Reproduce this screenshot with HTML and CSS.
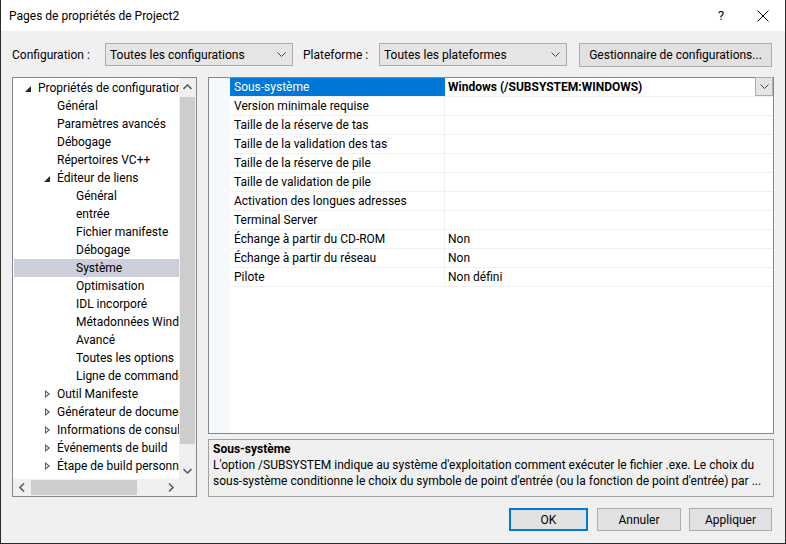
FILE: index.html
```html
<!DOCTYPE html>
<html lang="fr">
<head>
<meta charset="utf-8">
<title>Pages de propriétés de Project2</title>
<link rel="stylesheet" href="styles.css">
</head>
<body>
<div class="window">
  <div class="titlebar">
    <span class="title">Pages de propriétés de Project2</span>
    <span class="help">?</span>
    <span class="close"><svg width="12" height="12" viewBox="0 0 12 12"><path d="M0.5 0.5L11.5 11.5M11.5 0.5L0.5 11.5" stroke="#000" stroke-width="1" fill="none"/></svg></span>
  </div>
  <div class="body">
    <div class="config-row">
      <span class="label lbl-config">Configuration :</span>
      <div class="combo"><span>Toutes les configurations</span><svg class="chev" width="9" height="6" viewBox="0 0 9 6"><path d="M0.5 0.5L4.5 4.5L8.5 0.5" stroke="#444" fill="none"/></svg></div>
      <span class="label lbl-platform">Plateforme :</span>
      <div class="combo"><span>Toutes les plateformes</span><svg class="chev" width="9" height="6" viewBox="0 0 9 6"><path d="M0.5 0.5L4.5 4.5L8.5 0.5" stroke="#444" fill="none"/></svg></div>
      <button class="btn btn-manager">Gestionnaire de configurations...</button>
    </div>
    <div class="main">
      <div class="tree">
        <div class="tree-top">
          <div class="tree-list">
            <div class="node l0"><span class="glyph"><span class="exp"></span></span><span class="txt">Propriétés de configuration</span></div>
            <div class="node l1"><span class="glyph"></span><span class="txt">Général</span></div>
            <div class="node l1"><span class="glyph"></span><span class="txt">Paramètres avancés</span></div>
            <div class="node l1"><span class="glyph"></span><span class="txt">Débogage</span></div>
            <div class="node l1"><span class="glyph"></span><span class="txt">Répertoires VC++</span></div>
            <div class="node l1"><span class="glyph"><span class="exp"></span></span><span class="txt">Éditeur de liens</span></div>
            <div class="node l2"><span class="glyph"></span><span class="txt">Général</span></div>
            <div class="node l2"><span class="glyph"></span><span class="txt">entrée</span></div>
            <div class="node l2"><span class="glyph"></span><span class="txt">Fichier manifeste</span></div>
            <div class="node l2"><span class="glyph"></span><span class="txt">Débogage</span></div>
            <div class="node l2 selected"><span class="glyph"></span><span class="txt">Système</span></div>
            <div class="node l2"><span class="glyph"></span><span class="txt">Optimisation</span></div>
            <div class="node l2"><span class="glyph"></span><span class="txt">IDL incorporé</span></div>
            <div class="node l2"><span class="glyph"></span><span class="txt">Métadonnées Windows</span></div>
            <div class="node l2"><span class="glyph"></span><span class="txt">Avancé</span></div>
            <div class="node l2"><span class="glyph"></span><span class="txt">Toutes les options</span></div>
            <div class="node l2"><span class="glyph"></span><span class="txt">Ligne de commande</span></div>
            <div class="node l1"><span class="glyph"><span class="col"></span></span><span class="txt">Outil Manifeste</span></div>
            <div class="node l1"><span class="glyph"><span class="col"></span></span><span class="txt">Générateur de documents XML</span></div>
            <div class="node l1"><span class="glyph"><span class="col"></span></span><span class="txt">Informations de consultation</span></div>
            <div class="node l1"><span class="glyph"><span class="col"></span></span><span class="txt">Événements de build</span></div>
            <div class="node l1"><span class="glyph"><span class="col"></span></span><span class="txt">Étape de build personnalisée</span></div>
          </div>
          <div class="vscroll">
            <div class="sb-btn"><svg width="9" height="6" viewBox="0 0 9 6"><path d="M0.5 5L4.5 1L8.5 5" stroke="#606060" stroke-width="1.6" fill="none"/></svg></div>
            <div class="sb-track v"><div class="thumb"></div></div>
            <div class="sb-btn"><svg width="9" height="6" viewBox="0 0 9 6"><path d="M0.5 1L4.5 5L8.5 1" stroke="#606060" stroke-width="1.6" fill="none"/></svg></div>
          </div>
        </div>
        <div class="hscroll">
          <div class="sb-btn"><svg width="6" height="9" viewBox="0 0 6 9"><path d="M5 0.5L1 4.5L5 8.5" stroke="#606060" stroke-width="1.6" fill="none"/></svg></div>
          <div class="sb-track h"><div class="thumb"></div></div>
          <div class="sb-btn"><svg width="6" height="9" viewBox="0 0 6 9"><path d="M1 0.5L5 4.5L1 8.5" stroke="#606060" stroke-width="1.6" fill="none"/></svg></div>
          <div class="corner"></div>
        </div>
      </div>
      <div class="right">
        <div class="grid">
          <div class="gutter"></div>
          <div class="rows">
            <div class="row selected"><div class="name">Sous-système</div><div class="value bold">Windows (/SUBSYSTEM:WINDOWS)<span class="dd"><svg width="9" height="6" viewBox="0 0 9 6"><path d="M0.5 0.5L4.5 4.5L8.5 0.5" stroke="#444" fill="none"/></svg></span></div></div>
            <div class="row"><div class="name">Version minimale requise</div><div class="value"></div></div>
            <div class="row"><div class="name">Taille de la réserve de tas</div><div class="value"></div></div>
            <div class="row"><div class="name">Taille de la validation des tas</div><div class="value"></div></div>
            <div class="row"><div class="name">Taille de la réserve de pile</div><div class="value"></div></div>
            <div class="row"><div class="name">Taille de validation de pile</div><div class="value"></div></div>
            <div class="row"><div class="name">Activation des longues adresses</div><div class="value"></div></div>
            <div class="row"><div class="name">Terminal Server</div><div class="value"></div></div>
            <div class="row"><div class="name">Échange à partir du CD-ROM</div><div class="value">Non</div></div>
            <div class="row"><div class="name">Échange à partir du réseau</div><div class="value">Non</div></div>
            <div class="row"><div class="name">Pilote</div><div class="value">Non défini</div></div>
          </div>
        </div>
        <div class="desc">
          <div class="desc-title">Sous-système</div>
          <div class="desc-text">L'option /SUBSYSTEM indique au système d'exploitation comment exécuter le fichier .exe. Le choix du sous-système conditionne le choix du symbole de point d'entrée (ou la fonction de point d'entrée) par ...</div>
        </div>
      </div>
    </div>
    <div class="buttons">
      <button class="btn dlg default">OK</button>
      <button class="btn dlg">Annuler</button>
      <button class="btn dlg">Appliquer</button>
    </div>
  </div>
</div>
</body>
</html>
```
FILE: styles.css
```css
* { box-sizing: border-box; }
html, body { margin: 0; padding: 0; }
body {
  width: 786px;
  height: 544px;
  font-family: Roboto, "Noto Sans", sans-serif;
  font-size: 12px;
  color: #000;
  background: #f0f0f0;
  overflow: hidden;
}
.window {
  width: 786px;
  height: 544px;
  border: 1px solid #2b2b2b;
  border-top: none;
  display: flex;
  flex-direction: column;
  background: #f0f0f0;
}
.titlebar {
  height: 31px;
  background: #fff;
  display: flex;
  align-items: center;
  padding-left: 8px;
  flex: none;
}
.title { flex: 1; font-size: 12px; }
.help { width: 39px; font-size: 13px; }
.close { width: 28px; display: flex; align-items: center; }
.body {
  flex: 1;
  padding: 12px 13px 0 11px;
  display: flex;
  flex-direction: column;
}
.config-row {
  display: flex;
  align-items: center;
  height: 23px;
}
.label { flex: none; }
.lbl-config { width: 93px; }
.lbl-platform { width: 76px; margin-left: 10px; }
.combo {
  width: 188px;
  height: 23px;
  background: #e5e5e5;
  border: 1px solid #adadad;
  display: flex;
  align-items: center;
  justify-content: space-between;
  padding: 0 6px 0 4px;
}
.btn {
  font-family: inherit;
  font-size: 12px;
  color: #000;
  background: #e1e1e1;
  border: 1px solid #adadad;
  padding: 0;
  margin: 0;
}
.btn-manager {
  width: 193px;
  height: 24px;
  margin-left: 12px;
}
.main {
  display: flex;
  margin-top: 11px;
  height: 420px;
}
.tree {
  width: 185px;
  flex: none;
  border: 1px solid #828790;
  background: #fff;
  display: flex;
  flex-direction: column;
}
.tree-top {
  flex: 1;
  display: flex;
  min-height: 0;
}
.tree-list {
  flex: 1;
  overflow: hidden;
  padding-top: 1px;
}
.node {
  height: 18px;
  display: flex;
  align-items: center;
  white-space: nowrap;
}
.l0 { padding-left: 9px; }
.l1 { padding-left: 28px; }
.l2 { padding-left: 47px; }
.node.selected { background: #cccedb; margin-left: 1px; padding-left: 46px; }
.glyph {
  width: 16px;
  height: 18px;
  flex: none;
  position: relative;
}
.exp {
  position: absolute;
  left: 3px;
  top: 7px;
  width: 0; height: 0;
  border-left: 6px solid transparent;
  border-bottom: 6px solid #262626;
}
.col {
  position: absolute;
  left: 4px;
  top: 5px;
  width: 0; height: 0;
  border-top: 4px solid transparent;
  border-bottom: 4px solid transparent;
  border-left: 5px solid #555;
}
.col::after {
  content: "";
  position: absolute;
  left: -4px;
  top: -2px;
  width: 0; height: 0;
  border-top: 2px solid transparent;
  border-bottom: 2px solid transparent;
  border-left: 2.5px solid #fff;
}
.vscroll {
  width: 17px;
  flex: none;
  background: #f0f0f0;
  display: flex;
  flex-direction: column;
}
.sb-btn {
  width: 17px;
  height: 17px;
  flex: none;
  display: flex;
  align-items: center;
  justify-content: center;
}
.sb-track { flex: 1; position: relative; }
.sb-track.v .thumb {
  position: absolute;
  left: 1px; right: 1px;
  top: 2px;
  height: 347px;
  background: #cdcdcd;
}
.hscroll {
  height: 17px;
  flex: none;
  display: flex;
  background: #f0f0f0;
}
.sb-track.h .thumb {
  position: absolute;
  top: 1px; bottom: 1px;
  left: 1px;
  width: 106px;
  background: #cdcdcd;
}
.corner { width: 17px; flex: none; background: #f0f0f0; }
.right {
  width: 566px;
  margin-left: 11px;
  flex: none;
  display: flex;
  flex-direction: column;
}
.grid {
  height: 357px;
  border: 1px solid #828790;
  background: #fff;
  display: flex;
  flex: none;
}
.gutter { width: 21px; background: #f7f8fb; flex: none; }
.rows { flex: 1; }
.row {
  display: flex;
  height: 19px;
  border-bottom: 1px solid #eef0f4;
}
.name {
  width: 215px;
  padding-left: 4px;
  padding-top: 1px;
  border-right: 1px solid #eef0f4;
  line-height: 17px;
  white-space: nowrap;
}
.value {
  flex: 1;
  padding-left: 3px;
  padding-top: 1px;
  line-height: 17px;
  white-space: nowrap;
  display: flex;
  justify-content: space-between;
}
.bold { font-weight: bold; }
.row.selected .name { background: #0078d7; color: #fff; border-right-color: #0078d7; }
.dd {
  width: 18px;
  height: 19px;
  margin-top: -2px;
  background: #e5e5e5;
  border: 1px solid #adadad;
  display: flex;
  align-items: center;
  justify-content: center;
}
.desc {
  margin-top: 5px;
  height: 58px;
  border: 1px solid #a0a0a0;
  background: #f0f0f0;
  padding: 1px 4px 0 4px;
  line-height: 16px;
}
.desc-title { font-weight: bold; }
.buttons {
  display: flex;
  justify-content: flex-end;
  margin-top: 11px;
  gap: 9px;
}
.btn.dlg { width: 79px; height: 23px; }
.btn.dlg:nth-child(2) { width: 84px; }
.btn.dlg:nth-child(3) { width: 83px; margin-left: -1px; }
.btn.default { border: 2px solid #0078d7; }
```
